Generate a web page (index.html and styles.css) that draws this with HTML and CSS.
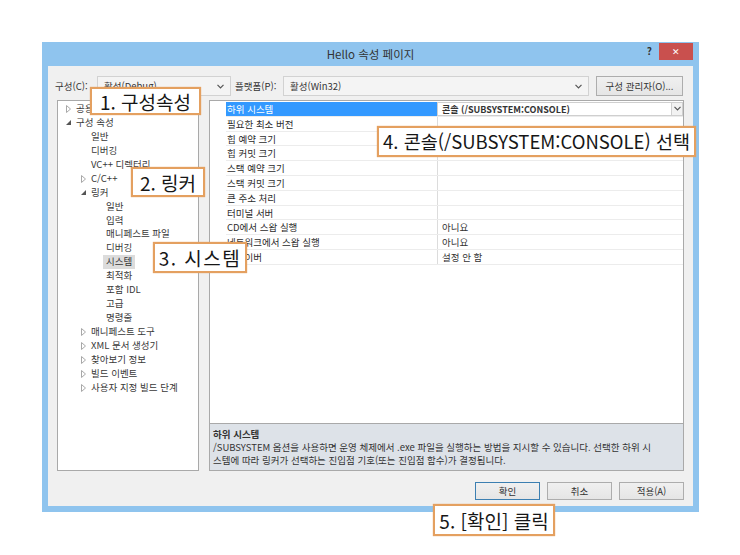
FILE: index.html
```html
<!DOCTYPE html>
<html lang="ko">
<head>
  <meta charset="UTF-8">
  <title>Hello 속성 페이지</title>
  <link rel="stylesheet" href="styles.css">
</head>
<body>
  <div class="page">
    <div class="dialog">
      <div class="titlebar">
        <span class="title">Hello 속성 페이지</span>
        <span class="help">?</span>
        <span class="close">&#x2715;</span>
      </div>
      <div class="client">
        <div class="toolbar">
          <span class="lab">구성(C):</span>
          <div class="combo combo-config">
            <span>활성(Debug)</span>
            <svg class="chev" width="7" height="5" viewBox="0 0 7 5"><path d="M0.5 0.8 L3.5 3.8 L6.5 0.8" fill="none" stroke="#555" stroke-width="1.2"/></svg>
          </div>
          <span class="lab lab-platform">플랫폼(P):</span>
          <div class="combo combo-platform">
            <span>활성(Win32)</span>
            <svg class="chev" width="7" height="5" viewBox="0 0 7 5"><path d="M0.5 0.8 L3.5 3.8 L6.5 0.8" fill="none" stroke="#555" stroke-width="1.2"/></svg>
          </div>
          <button class="btn btn-manager">구성 관리자(O)...</button>
        </div>

        <div class="main">
          <ul class="tree">
            <li class="node l0"><span class="tw"><svg width="5" height="8" viewBox="0 0 5 8"><path d="M0.5 0.5 L4.5 4 L0.5 7.5 Z" fill="none" stroke="#a8a8a8"/></svg></span><span class="lbl">공용 속성</span></li>
            <li class="node l0"><span class="tw"><svg width="5" height="5" viewBox="0 0 5 5"><path d="M5 0 L5 5 L0 5 Z" fill="#555"/></svg></span><span class="lbl">구성 속성</span></li>
            <li class="node l1"><span class="tw"></span><span class="lbl">일반</span></li>
            <li class="node l1"><span class="tw"></span><span class="lbl">디버깅</span></li>
            <li class="node l1"><span class="tw"></span><span class="lbl">VC++ 디렉터리</span></li>
            <li class="node l1"><span class="tw"><svg width="5" height="8" viewBox="0 0 5 8"><path d="M0.5 0.5 L4.5 4 L0.5 7.5 Z" fill="none" stroke="#a8a8a8"/></svg></span><span class="lbl">C/C++</span></li>
            <li class="node l1"><span class="tw"><svg width="5" height="5" viewBox="0 0 5 5"><path d="M5 0 L5 5 L0 5 Z" fill="#555"/></svg></span><span class="lbl">링커</span></li>
            <li class="node l2"><span class="tw"></span><span class="lbl">일반</span></li>
            <li class="node l2"><span class="tw"></span><span class="lbl">입력</span></li>
            <li class="node l2"><span class="tw"></span><span class="lbl">매니페스트 파일</span></li>
            <li class="node l2"><span class="tw"></span><span class="lbl">디버깅</span></li>
            <li class="node l2 selected"><span class="tw"></span><span class="lbl">시스템</span></li>
            <li class="node l2"><span class="tw"></span><span class="lbl">최적화</span></li>
            <li class="node l2"><span class="tw"></span><span class="lbl">포함 IDL</span></li>
            <li class="node l2"><span class="tw"></span><span class="lbl">고급</span></li>
            <li class="node l2"><span class="tw"></span><span class="lbl">명령줄</span></li>
            <li class="node l1"><span class="tw"><svg width="5" height="8" viewBox="0 0 5 8"><path d="M0.5 0.5 L4.5 4 L0.5 7.5 Z" fill="none" stroke="#a8a8a8"/></svg></span><span class="lbl">매니페스트 도구</span></li>
            <li class="node l1"><span class="tw"><svg width="5" height="8" viewBox="0 0 5 8"><path d="M0.5 0.5 L4.5 4 L0.5 7.5 Z" fill="none" stroke="#a8a8a8"/></svg></span><span class="lbl">XML 문서 생성기</span></li>
            <li class="node l1"><span class="tw"><svg width="5" height="8" viewBox="0 0 5 8"><path d="M0.5 0.5 L4.5 4 L0.5 7.5 Z" fill="none" stroke="#a8a8a8"/></svg></span><span class="lbl">찾아보기 정보</span></li>
            <li class="node l1"><span class="tw"><svg width="5" height="8" viewBox="0 0 5 8"><path d="M0.5 0.5 L4.5 4 L0.5 7.5 Z" fill="none" stroke="#a8a8a8"/></svg></span><span class="lbl">빌드 이벤트</span></li>
            <li class="node l1"><span class="tw"><svg width="5" height="8" viewBox="0 0 5 8"><path d="M0.5 0.5 L4.5 4 L0.5 7.5 Z" fill="none" stroke="#a8a8a8"/></svg></span><span class="lbl">사용자 지정 빌드 단계</span></li>
          </ul>

          <div class="right">
            <div class="grid">
              <div class="row active">
                <div class="name">하위 시스템</div>
                <div class="value">
                  <span class="strong">콘솔 (/SUBSYSTEM:CONSOLE)</span>
                  <span class="dd"><svg width="7" height="5" viewBox="0 0 7 5"><path d="M0.5 0.8 L3.5 3.8 L6.5 0.8" fill="none" stroke="#555" stroke-width="1.2"/></svg></span>
                </div>
              </div>
              <div class="row"><div class="name">필요한 최소 버전</div><div class="value"></div></div>
              <div class="row"><div class="name">힙 예약 크기</div><div class="value"></div></div>
              <div class="row"><div class="name">힙 커밋 크기</div><div class="value"></div></div>
              <div class="row"><div class="name">스택 예약 크기</div><div class="value"></div></div>
              <div class="row"><div class="name">스택 커밋 크기</div><div class="value"></div></div>
              <div class="row"><div class="name">큰 주소 처리</div><div class="value"></div></div>
              <div class="row"><div class="name">터미널 서버</div><div class="value"></div></div>
              <div class="row"><div class="name">CD에서 스왑 실행</div><div class="value">아니요</div></div>
              <div class="row"><div class="name">네트워크에서 스왑 실행</div><div class="value">아니요</div></div>
              <div class="row"><div class="name">드라이버</div><div class="value">설정 안 함</div></div>
            </div>
            <div class="desc">
              <div class="desc-title">하위 시스템</div>
              <p>/SUBSYSTEM 옵션을 사용하면 운영 체제에서 .exe 파일을 실행하는 방법을 지시할 수 있습니다. 선택한 하위 시<br>스템에 따라 링커가 선택하는 진입점 기호(또는 진입점 함수)가 결정됩니다.</p>
            </div>
          </div>
        </div>

        <div class="buttons">
          <button class="btn btn-default">확인</button>
          <button class="btn">취소</button>
          <button class="btn">적용(A)</button>
        </div>
      </div>
    </div>

    <div class="callout c1">1. 구성속성</div>
    <div class="callout c2">2. 링커</div>
    <div class="callout c3">3. 시스템</div>
    <div class="callout c4">4. 콘솔(/SUBSYSTEM:CONSOLE) 선택</div>
    <div class="callout c5">5. [확인] 클릭</div>
  </div>
</body>
</html>
```

FILE: styles.css
```css
* { box-sizing: border-box; }
body { margin: 0; background: #fff; font-family: "Noto Sans CJK KR", "Noto Sans", sans-serif; color: #2b2b2b; }
.page { position: relative; width: 740px; height: 555px; overflow: hidden; }

/* dialog frame */
.dialog { margin: 42px 0 0 42px; width: 657px; height: 470px; background: #8fc4ee; padding: 0 6px 6px 6px; display: flex; flex-direction: column; }
.titlebar { position: relative; height: 24px; text-align: center; font-size: 11.5px; line-height: 24px; color: #333; }
.help { position: absolute; right: 41px; top: 0; font-size: 10px; font-weight: bold; line-height: 17px; color: #333; }
.close { position: absolute; right: 0; top: 1px; width: 34px; height: 17px; background: #c9504e; color: #fff; font-size: 9px; line-height: 17px; text-align: center; }

.client { flex: 1; background: #f0f0f0; padding: 10px 9px 0 9px; font-size: 9.5px; }

/* top row */
.toolbar { display: flex; align-items: center; height: 20px; }
.lab { margin-left: -2px; width: 42px; color: #333; }
.lab-platform { margin-left: 4px; width: 48px; }
.combo { height: 20px; display: flex; align-items: center; justify-content: space-between; padding: 0 6px 0 6px; background: #f4f4f4; border: 1px solid #d2d2d2; color: #333; }
.combo-config { width: 134px; }
.combo-platform { width: 306px; }
.chev { display: block; }
.btn { font-family: inherit; font-size: 9.5px; color: #333; height: 18px; padding: 0; background: linear-gradient(#f0f0f0, #e5e5e5); border: 1px solid #adadad; }
.btn-manager { margin-left: 7px; width: 87px; height: 20px; }

/* main area */
.main { display: flex; gap: 10px; margin-top: 4px; height: 371px; }
.tree { list-style: none; margin: 0; padding: 0; width: 142px; background: #fff; border: 1px solid #a9a9a9; padding-top: 1px; }
.node { display: flex; align-items: center; height: 13.95px; line-height: 13.95px; white-space: nowrap; color: #383838; }
.tw { width: 10px; display: flex; align-items: center; }
.l0 { padding-left: 8px; }
.l1 { padding-left: 23px; }
.l2 { padding-left: 38px; }
.selected .lbl { background: #dcdcdc; margin-left: -3px; padding: 0 3px; }

.right { flex: 1; display: flex; flex-direction: column; }
.grid { height: 323px; background: #fff; border: 1px solid #a9a9a9; border-bottom: none; padding: 1px 0 0 16px; }
.row { display: flex; height: 14.8px; line-height: 14px; border-bottom: 1px solid #ececec; }
.name { width: 211px; padding-left: 1px; color: #2b2b2b; }
.value { flex: 1; display: flex; justify-content: space-between; padding-left: 4px; border-left: 1px solid #dcdcdc; color: #333; }
.active .name { background: #3399ff; color: #fff; }
.active .value { border: 1px solid #cfcfcf; }
.strong { font-weight: bold; font-size: 9px; }
.dd { width: 11px; display: flex; align-items: center; justify-content: center; border-left: 1px solid #cfcfcf; background: #f2f2f2; }

.desc { flex: 1; background: #dde2e8; border: 1px solid #a9a9a9; padding: 4px 3px 0 3px; line-height: 13px; color: #333; }
.desc-title { font-weight: bold; }
.desc p { margin: 0; white-space: nowrap; }

.buttons { display: flex; justify-content: flex-end; gap: 7px; margin-top: 11px; }
.buttons .btn { width: 65px; }
.btn-default { border-color: #3c7fb1; }

/* annotation callouts */
.callout { position: absolute; background: #fff; border: 2px solid #e4a060; box-shadow: 0 0 1px #e4a060; font-size: 19px; line-height: 1; color: #161616; display: flex; align-items: center; justify-content: center; white-space: nowrap; }
.c1 { left: 90px; top: 87px; width: 111px; height: 28px; }
.c2 { left: 131px; top: 167px; width: 74px; height: 30px; }
.c3 { left: 153px; top: 242px; width: 94px; height: 31px; letter-spacing: 1.5px; }
.c4 { left: 377px; top: 126px; width: 319px; height: 31px; font-size: 18.5px; }
.c5 { left: 433px; top: 504px; width: 122px; height: 32px; }
```
